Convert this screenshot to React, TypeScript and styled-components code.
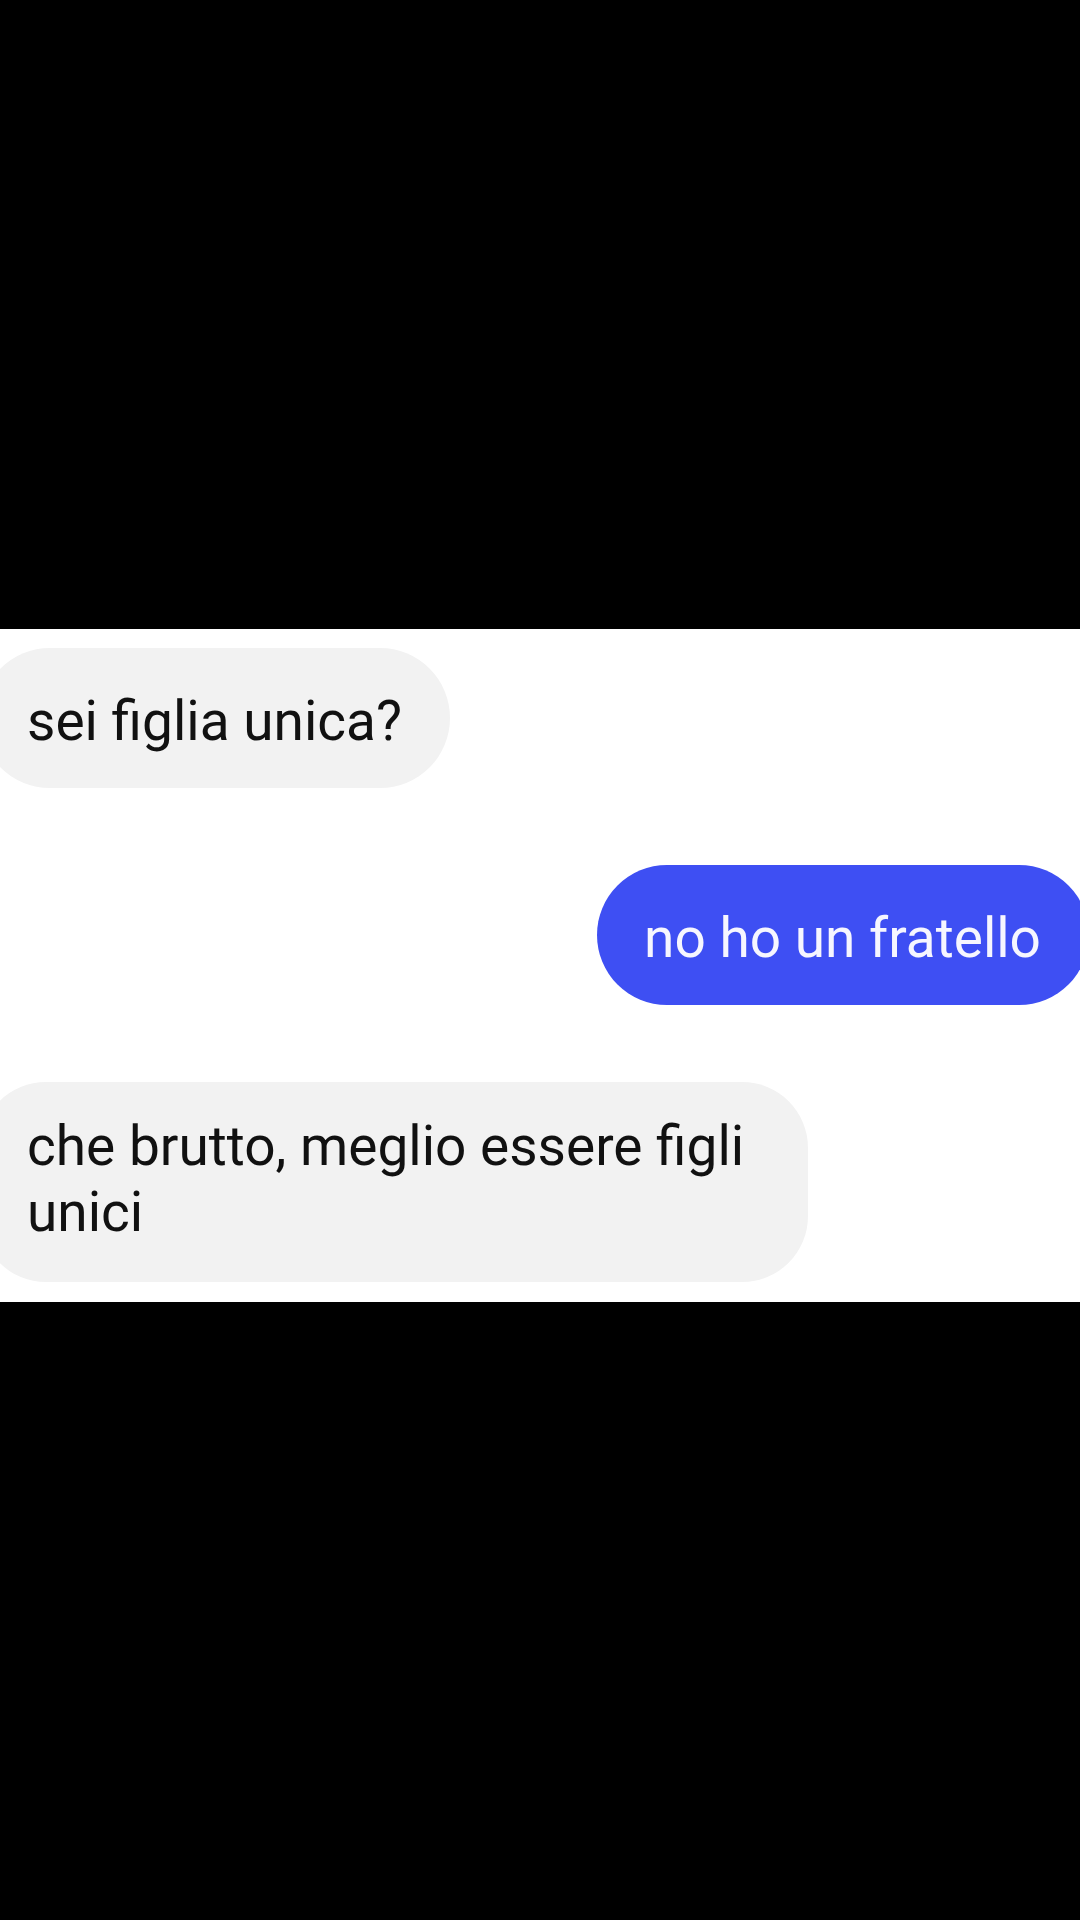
import React from "react";
import styled, { createGlobalStyle } from "styled-components";

const Global = createGlobalStyle`
  html, body {
    margin: 0;
    padding: 0;
    background: #000;
  }
  #root {
    width: 1080px;
    height: 1920px;
    overflow: hidden;
  }
`;

const Page = styled.div`
  width: 1080px;
  height: 1920px;
  background: #000;
  display: flex;
  flex-direction: column;
  overflow: hidden;
`;

const Spacer = styled.div<{ $h: number }>`
  height: ${(p) => p.$h}px;
  flex-shrink: 0;
  background: #000;
`;

const Chat = styled.div`
  background: #fff;
  height: 673px;
  flex-shrink: 0;
  box-sizing: border-box;
  padding-top: 19px;
  display: flex;
  flex-direction: column;
  gap: 77px;
  overflow: hidden;
`;

const Row = styled.div<{ $out?: boolean }>`
  display: flex;
  justify-content: ${(p) => (p.$out ? "flex-end" : "flex-start")};
  margin-left: ${(p) => (p.$out ? "0" : "-20px")};
  margin-right: ${(p) => (p.$out ? "-9px" : "0")};
`;

const Bubble = styled.div<{ $out?: boolean; $multi?: boolean }>`
  box-sizing: border-box;
  width: ${(p) => (p.$multi ? "828px" : "auto")};
  padding: ${(p) => (p.$multi ? "31px 20px 37px 47px" : "40px 48px 34px 47px")};
  border-radius: ${(p) => (p.$multi ? "66px" : "72px")};
  background: ${(p) => (p.$out ? "#3e4ff3" : "#f2f2f2")};
  color: ${(p) => (p.$out ? "#f6f6ff" : "#111")};
  font-family: Roboto, "Liberation Sans", Arial, sans-serif;
  font-size: 55px;
  line-height: 66px;
  white-space: ${(p) => (p.$multi ? "normal" : "nowrap")};
`;

export default function App() {
  return (
    <>
      <Global />
      <Page>
        <Spacer $h={629} />
        <Chat>
          <Row>
            <Bubble>sei figlia unica?</Bubble>
          </Row>
          <Row $out>
            <Bubble $out>no ho un fratello</Bubble>
          </Row>
          <Row>
            <Bubble $multi>che brutto, meglio essere figli unici</Bubble>
          </Row>
        </Chat>
        <Spacer $h={618} />
      </Page>
    </>
  );
}
